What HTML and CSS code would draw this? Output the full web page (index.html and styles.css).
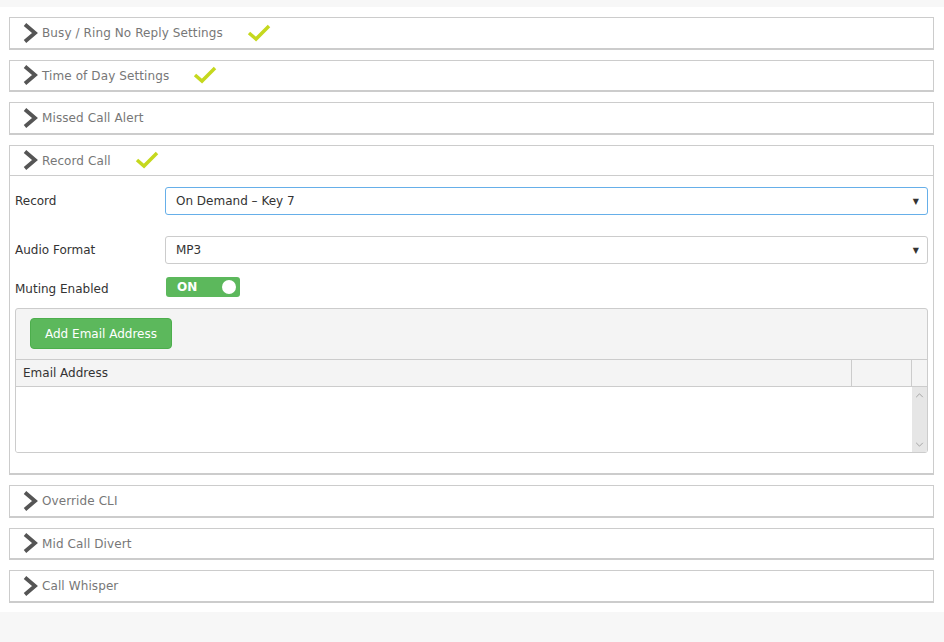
FILE: index.html
```html
<!DOCTYPE html>
<html>
<head>
    <link rel="stylesheet" href="styles.css">
</head>
<body>
    <div class="page">
        <div class="panel">
            <div class="panel-head">
                <svg class="chevron" viewBox="0 0 16 20"><path d="M3 1.5 L13 10 L3 18.5" /></svg>
                <span class="title">Busy / Ring No Reply Settings</span>
                <svg class="tick" viewBox="0 0 24 18"><path d="M2 9 L9 15 L22 2" /></svg>
            </div>
        </div>

        <div class="panel">
            <div class="panel-head">
                <svg class="chevron" viewBox="0 0 16 20"><path d="M3 1.5 L13 10 L3 18.5" /></svg>
                <span class="title">Time of Day Settings</span>
                <svg class="tick" viewBox="0 0 24 18"><path d="M2 9 L9 15 L22 2" /></svg>
            </div>
        </div>

        <div class="panel">
            <div class="panel-head">
                <svg class="chevron" viewBox="0 0 16 20"><path d="M3 1.5 L13 10 L3 18.5" /></svg>
                <span class="title">Missed Call Alert</span>
            </div>
        </div>

        <div class="panel open">
            <div class="panel-head">
                <svg class="chevron" viewBox="0 0 16 20"><path d="M3 1.5 L13 10 L3 18.5" /></svg>
                <span class="title">Record Call</span>
                <svg class="tick" viewBox="0 0 24 18"><path d="M2 9 L9 15 L22 2" /></svg>
            </div>
            <div class="panel-body">
                <div class="row">
                    <label>Record</label>
                    <div class="select focused">On Demand &ndash; Key 7<span class="caret">&#9660;</span></div>
                </div>
                <div class="row">
                    <label>Audio Format</label>
                    <div class="select">MP3<span class="caret">&#9660;</span></div>
                </div>
                <div class="row toggle-row">
                    <label>Muting Enabled</label>
                    <div class="toggle"><span>ON</span><i></i></div>
                </div>

                <div class="email-box">
                    <div class="email-tools">
                        <button>Add Email Address</button>
                    </div>
                    <div class="grid-head">
                        <div class="col-main">Email Address</div>
                        <div class="col-extra"></div>
                        <div class="col-scroll"></div>
                    </div>
                    <div class="grid-body">
                        <div class="grid-rows"></div>
                        <div class="scrollbar">
                            <svg viewBox="0 0 10 6"><path d="M1 5 L5 1 L9 5" /></svg>
                            <svg viewBox="0 0 10 6"><path d="M1 1 L5 5 L9 1" /></svg>
                        </div>
                    </div>
                </div>
            </div>
        </div>

        <div class="panel">
            <div class="panel-head">
                <svg class="chevron" viewBox="0 0 16 20"><path d="M3 1.5 L13 10 L3 18.5" /></svg>
                <span class="title">Override CLI</span>
            </div>
        </div>

        <div class="panel">
            <div class="panel-head">
                <svg class="chevron" viewBox="0 0 16 20"><path d="M3 1.5 L13 10 L3 18.5" /></svg>
                <span class="title">Mid Call Divert</span>
            </div>
        </div>

        <div class="panel">
            <div class="panel-head">
                <svg class="chevron" viewBox="0 0 16 20"><path d="M3 1.5 L13 10 L3 18.5" /></svg>
                <span class="title">Call Whisper</span>
            </div>
        </div>
    </div>
</body>
</html>
```

FILE: styles.css
```css
body {
    margin: 0;
    padding: 7px 0 0;
    background: #f7f7f7;
    font-family: "DejaVu Sans", Verdana, sans-serif;
    font-size: 12px;
    color: #333;
}

.page {
    background: #fff;
    padding: 10px 10px 10px 9px;
    height: 605px;
    box-sizing: border-box;
}

.panel {
    border: 1px solid #ccc;
    border-bottom-width: 2px;
    background: #fff;
    margin-bottom: 10px;
}

.panel-head {
    height: 29.5px;
    display: flex;
    align-items: center;
    padding-left: 12px;
}

.chevron {
    width: 16px;
    height: 20px;
    margin-right: 4px;
}

.chevron path {
    fill: none;
    stroke: #555;
    stroke-width: 3.8;
    stroke-linejoin: miter;
}

.title {
    color: #777;
    letter-spacing: 0.1px;
    margin-top: 1px;
}

.tick {
    width: 24px;
    height: 18px;
    margin-left: 24px;
}

.tick path {
    fill: none;
    stroke: #c5d81e;
    stroke-width: 3.5;
}

.panel.open .panel-head {
    border-bottom: 1px solid #ccc;
}

.panel-body {
    padding: 11px 5px 20px 5px;
}

.row {
    display: flex;
    align-items: center;
    margin-bottom: 21px;
}

.row label {
    width: 150px;
    margin-top: -1px;
}

.select {
    flex: 1;
    height: 26px;
    border: 1px solid #ccc;
    border-radius: 3px;
    display: flex;
    align-items: center;
    padding-left: 10px;
    position: relative;
}

.select.focused {
    border-color: #66afe9;
}

.caret {
    position: absolute;
    right: 8px;
    top: 9px;
    font-size: 8px;
    color: #333;
}

.toggle-row {
    margin-top: -8px;
    margin-bottom: 11px;
}

.toggle-row label {
    margin-top: 4px;
}

.toggle {
    width: 74px;
    height: 20px;
    border-radius: 3px;
    background: #5cb85c;
    display: flex;
    align-items: center;
    justify-content: space-between;
    padding: 0 4px 0 11px;
    box-sizing: border-box;
    margin-left: 1px;
}

.toggle span {
    color: #fff;
    font-weight: bold;
}

.toggle i {
    width: 14px;
    height: 14px;
    border-radius: 50%;
    background: #fff;
}

.email-box {
    border: 1px solid #ccc;
    border-radius: 3px;
    background: #f4f4f4;
    overflow: hidden;
}

.email-tools {
    padding: 9px 14px 10px;
    border-bottom: 1px solid #ccc;
}

.email-tools button {
    display: block;
    background: #5cb85c;
    border: 1px solid #4cae4c;
    border-radius: 4px;
    color: #fff;
    font-family: inherit;
    font-size: 12px;
    height: 31px;
    padding: 0 14px;
}

.grid-head {
    display: flex;
    height: 26px;
    border-bottom: 1px solid #ccc;
}

.col-main {
    flex: 1;
    padding-left: 7px;
    display: flex;
    align-items: center;
    border-right: 1px solid #ccc;
}

.col-extra {
    width: 59px;
    border-right: 1px solid #ccc;
}

.col-scroll {
    width: 15px;
}

.grid-body {
    display: flex;
    height: 65px;
    background: #fff;
}

.grid-rows {
    flex: 1;
}

.scrollbar {
    width: 15px;
    background: #e6e6e6;
    display: flex;
    flex-direction: column;
    justify-content: space-between;
    align-items: center;
    padding: 6px 0 5px;
    box-sizing: border-box;
}

.scrollbar svg {
    width: 9px;
    height: 5px;
}

.scrollbar path {
    fill: none;
    stroke: #999;
    stroke-width: 1;
}
```
